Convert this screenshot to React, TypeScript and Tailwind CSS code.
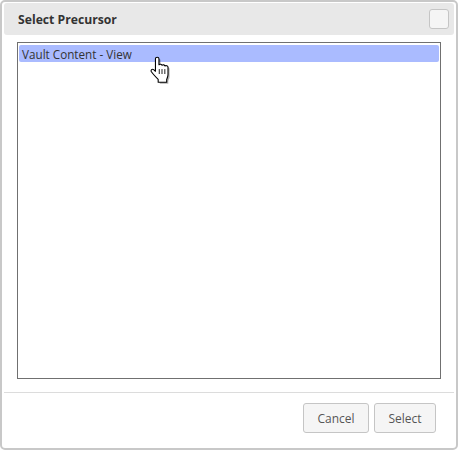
function HandCursor() {
    const hand =
        "M5 2.500c0-1.800 3.200-1.800 3.200 0V8c1-.8 2.500-.5 2.800.5 1-.8 2.300-.4 2.600.6 1-.6 2.900 0 2.900 1.200V17c0 2-.8 3-1.200 4.500v2.500H7.500v-2.500C5.500 19.500 3 17 1.300 14.500c-.9-1.500.7-3 2-2l1.700 1.500z";
    return (
        <svg className="absolute left-[150px] top-[56px]" width="24" height="30" viewBox="0 0 22 27.500">
            <path d={hand} fill="#000" opacity="0.3" transform="translate(1.500 1.500)" />
            <path d={hand} fill="#fff" stroke="#000" strokeWidth="1" strokeLinejoin="round" />
            <path d="M8.500 12v4.500M11 12v4.500M13.600 12v4.500" stroke="#000" strokeWidth="0.8" fill="none" />
        </svg>
    );
}

export default function App() {
    return (
        <div className="relative w-[458px] h-[450px] bg-white font-['Open_Sans',sans-serif] text-[#333]">
            <div className="flex flex-col w-[458px] h-[450px] border-2 border-[#c8c8c8] rounded-[5px] px-[2px] pt-[1px] bg-white">
                <div className="flex items-center justify-between h-[32px] shrink-0 bg-[#e8e8e8] rounded-[3px] pl-[14px] pr-[5px]">
                    <span className="pt-[2px] text-[12.2px] font-bold text-[#333]">Select Precursor</span>
                    <div className="w-[20px] h-[20px] bg-[#f5f5f5] border border-[#c5c5c5] rounded-[3px]" />
                </div>
                <div className="flex flex-col flex-1 min-h-0 mt-[7px] mx-[13px] mb-[13px] border border-[#707070] px-[1px] py-[2px]">
                    <div className="h-[17px] bg-[#aabbff] rounded-[2px] pl-[3px] text-[11.7px] leading-[18px]">
                        Vault Content - View
                    </div>
                </div>
                <div className="flex justify-end gap-[5px] h-[56px] shrink-0 border-t border-[#dcdcdc] pt-[10px] pr-[18px]">
                    <button className="w-[66px] h-[30px] pt-[1px] bg-[#f5f5f5] border border-[#c5c5c5] rounded-[3px] text-[12px] text-[#555]">
                        Cancel
                    </button>
                    <button className="w-[62px] h-[30px] pt-[1px] bg-[#f5f5f5] border border-[#c5c5c5] rounded-[3px] text-[12px] text-[#555]">
                        Select
                    </button>
                </div>
            </div>
            <HandCursor />
        </div>
    );
}
